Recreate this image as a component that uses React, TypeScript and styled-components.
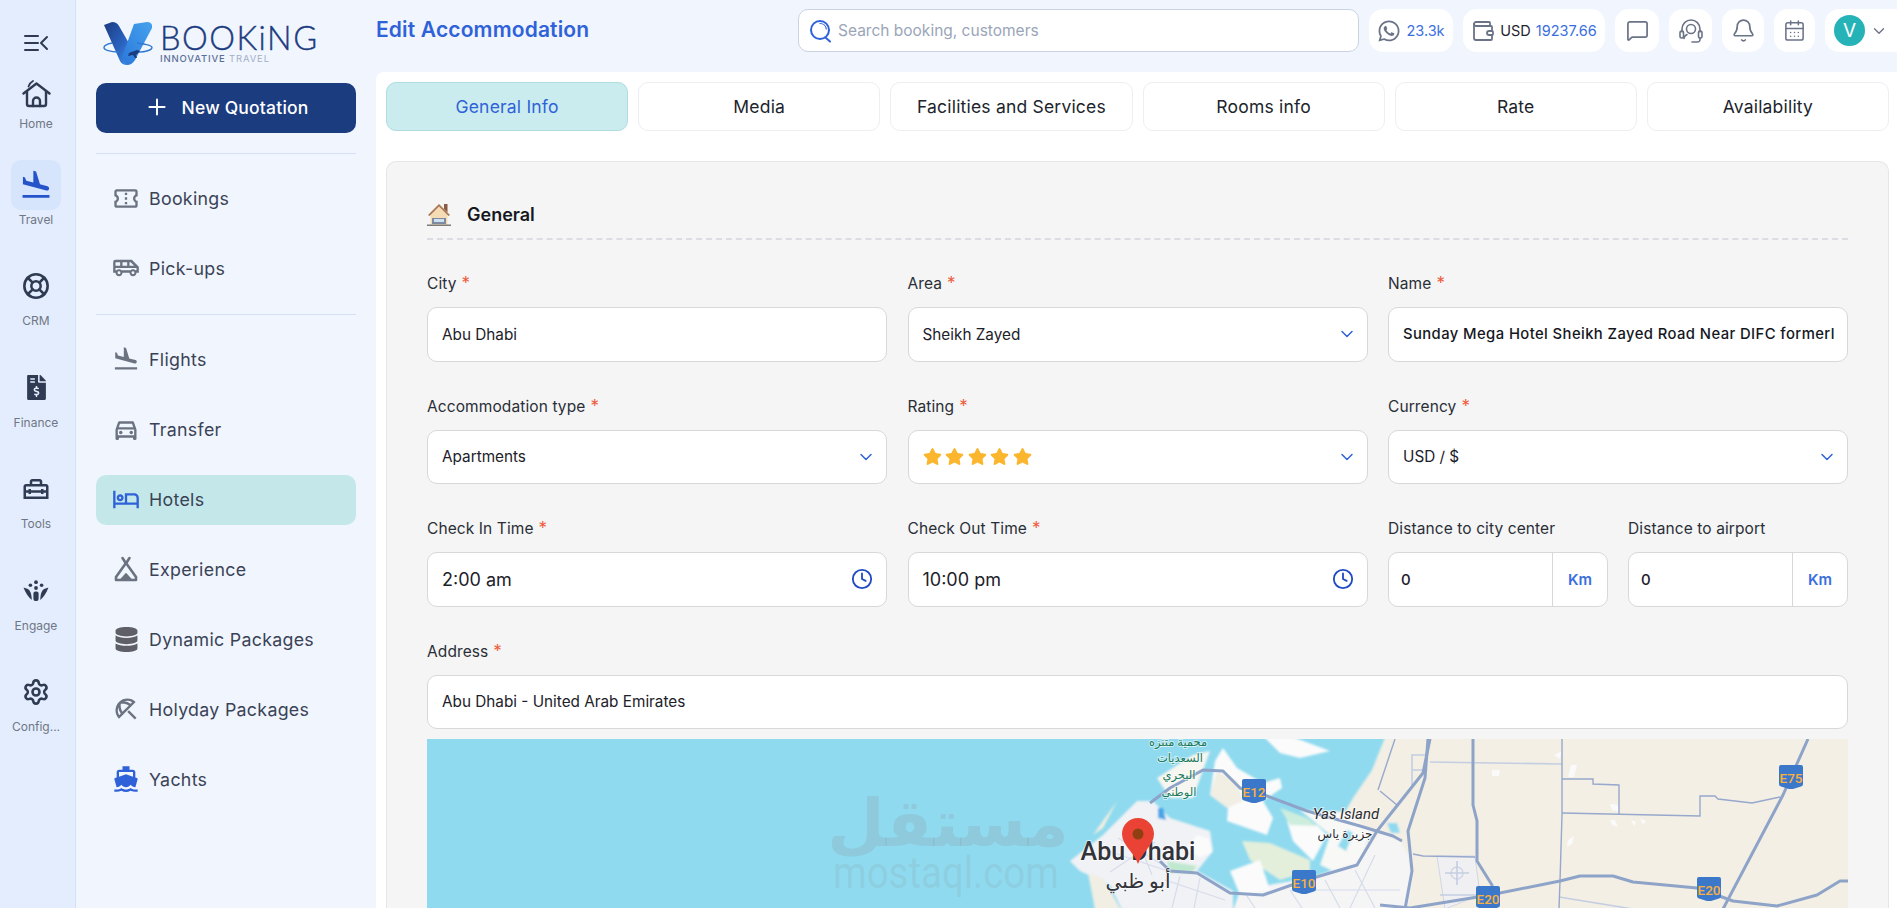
import type { ReactNode } from "react";
import styled, { createGlobalStyle } from "styled-components";
import {
  Bell,
  CalendarDays,
  ChevronDown,
  Clock,
  LifeBuoy,
  MessageSquare,
  Plus,
  Settings,
  Wallet,
} from "lucide-react";
import { FaDatabase, FaFileInvoiceDollar, FaStar, FaWhatsapp } from "react-icons/fa";
import {
  MdDirectionsBoat,
  MdFlightLand,
  MdOutlineAirportShuttle,
  MdOutlineBeachAccess,
  MdOutlineConfirmationNumber,
  MdOutlineDirectionsCar,
  MdOutlineHomeRepairService,
  MdOutlineHotel,
} from "react-icons/md";

const GlobalStyle = createGlobalStyle`
  html, body {
    margin: 0;
    height: 100%;
    overflow: hidden;
    background: #fff;
    font-family: Inter, "Noto Sans", sans-serif;
  }
  * { box-sizing: border-box; }
`;

const Page = styled.div`
  display: flex;
  height: 908px;
  width: 1897px;
  overflow: hidden;
`;

const Rail = styled.nav`
  width: 76px;
  flex: none;
  background: #e4edfd;
  border-right: 1px solid #d3e0f8;
  padding-right: 3px;
  display: flex;
  flex-direction: column;
  align-items: center;
`;

const RailToggle = styled.div`
  height: 74px;
  width: 100%;
  display: flex;
  justify-content: center;
  align-items: flex-start;
  padding-top: 33px;
`;

const RailList = styled.div`
  display: flex;
  flex-direction: column;
  gap: 33.5px;
  width: 100%;
`;

const RailItem = styled.div<{ $compact?: boolean }>`
  display: flex;
  flex-direction: column;
  align-items: center;
  height: ${(p) => (p.$compact ? "57px" : "68px")};
  margin-bottom: ${(p) => (p.$compact ? "-5px" : "0")};
`;

const RailIcon = styled.div<{ $active?: boolean; $compact?: boolean }>`
  width: 50px;
  height: ${(p) => (p.$compact ? "40px" : "50px")};
  flex: none;
  display: flex;
  align-items: center;
  justify-content: center;
  border-radius: 10px;
  color: ${(p) => (p.$active ? "#2553c9" : "#2f3b52")};
  background: ${(p) => (p.$active ? "#d6e4fc" : "transparent")};
`;

const RailLabel = styled.span`
  margin-top: 2px;
  font-size: 12px;
  line-height: 16px;
  color: #6f7785;
  white-space: nowrap;
`;

const Sidebar = styled.aside`
  width: 300px;
  flex: none;
  background: #f1f5fe;
  padding: 0 20px;
  display: flex;
  flex-direction: column;
`;

const LogoRow = styled.div`
  height: 83px;
  display: flex;
  align-items: flex-start;
  padding: 22px 0 0 7px;
  gap: 7px;
`;

const LogoText = styled.div`
  display: flex;
  flex-direction: column;
`;

const LogoWord = styled.span`
  font-family: Lato, sans-serif;
  font-weight: 300;
  font-size: 32.5px;
  line-height: 31px;
  letter-spacing: 1.5px;
  color: #1c3c80;
  -webkit-text-stroke: 0.4px #1c3c80;
`;

const LogoTag = styled.span`
  font-size: 9.5px;
  line-height: 11px;
  letter-spacing: 0.85px;
  font-weight: 500;
  color: #5a6f96;
  white-space: nowrap;

  em {
    font-style: normal;
    color: #a3afc6;
    font-weight: 400;
  }
`;

const NewButton = styled.div`
  height: 50px;
  flex: none;
  border-radius: 10px;
  background: #1c3c80;
  color: #fff;
  display: flex;
  align-items: center;
  justify-content: center;
  gap: 12px;
  padding-bottom: 2px;
  font-size: 17.5px;
  letter-spacing: 0.2px;
  font-weight: 500;
`;

const SideDivider = styled.div`
  height: 1px;
  flex: none;
  margin: 20px 0;
  background: #d5e0f8;
`;

const SideGroup = styled.div`
  display: flex;
  flex-direction: column;
  gap: 20px;
`;

const SideItem = styled.div<{ $active?: boolean }>`
  height: 50px;
  border-radius: 10px;
  display: flex;
  align-items: center;
  gap: 9px;
  padding: 0 0 2px 16px;
  font-size: 17.8px;
  letter-spacing: 0.3px;
  color: #3a4356;
  background: ${(p) => (p.$active ? "#c4e8e9" : "transparent")};
`;

const SideIcon = styled.span<{ $blue?: boolean }>`
  width: 28px;
  display: flex;
  justify-content: center;
  color: ${(p) => (p.$blue ? "#2f62d9" : "#6b7280")};
`;

const Main = styled.main`
  flex: 1;
  min-width: 0;
  background: #f1f5fe;
  display: flex;
  flex-direction: column;
`;

const Header = styled.header`
  height: 72px;
  flex: none;
  display: flex;
  align-items: flex-start;
  padding-top: 9px;
  gap: 10px;
`;

const Title = styled.h1`
  flex: 1;
  margin: 0;
  font-size: 21px;
  line-height: 42px;
  letter-spacing: 0.15px;
  font-weight: 600;
  color: #2f62d9;
`;

const Search = styled.div`
  width: 561px;
  height: 43px;
  flex: none;
  background: #fff;
  border: 1px solid #cbd3e3;
  border-radius: 10px;
  display: flex;
  align-items: center;
  gap: 6px;
  padding-left: 10px;
  font-size: 15.5px;
  color: #9aa5b8;
`;

const Chip = styled.div<{ $w: number; $clip?: boolean }>`
  width: ${(p) => p.$w}px;
  height: 43px;
  flex: none;
  background: #fff;
  border-radius: ${(p) => (p.$clip ? "14px 0 0 14px" : "14px")};
  display: flex;
  align-items: center;
  justify-content: center;
  gap: 5px;
  font-size: 14.5px;
  color: #6b7386;
`;

const Blue = styled.span`
  color: #3a6fe0;
`;

const Dark = styled.span`
  color: #1f2430;
`;

const Avatar = styled.span`
  width: 31px;
  height: 31px;
  border-radius: 50%;
  background: #26b3b8;
  color: #fff;
  font-size: 19px;
  display: flex;
  align-items: center;
  justify-content: center;
`;

const Content = styled.section`
  flex: 1;
  min-height: 0;
  background: #fff;
  border-radius: 8px 0 0 0;
  padding: 10px 8px 0 10px;
  display: flex;
  flex-direction: column;
  gap: 30px;
`;

const Tabs = styled.div`
  display: grid;
  grid-template-columns: repeat(6, 1fr);
  gap: 10px;
  flex: none;
`;

const Tab = styled.div<{ $active?: boolean }>`
  height: 49px;
  border-radius: 10px;
  border: 1px solid ${(p) => (p.$active ? "#aedcdf" : "#eceef2")};
  background: ${(p) => (p.$active ? "#cbecee" : "#fff")};
  color: ${(p) => (p.$active ? "#2f62d9" : "#20242c")};
  font-size: 17.5px;
  letter-spacing: 0.2px;
  display: flex;
  align-items: center;
  justify-content: center;
`;

const Panel = styled.div`
  flex: 1;
  min-height: 0;
  background: #f5f5f5;
  border: 1px solid #e6e6e6;
  border-bottom: none;
  border-radius: 10px 10px 0 0;
  padding: 41px 40px 0 40px;
  overflow: hidden;
`;

const PanelHead = styled.div`
  display: flex;
  align-items: center;
  gap: 16px;
  height: 22px;
  box-sizing: content-box;
  padding-bottom: 13px;
  border-bottom: 2px dashed #dcdde2;
  margin-bottom: 32px;
  font-size: 18px;
  font-weight: 600;
  color: #15181f;
`;

const FormGrid = styled.div`
  display: grid;
  grid-template-columns: repeat(3, 1fr);
  column-gap: 20.5px;
  row-gap: 33px;
`;

const Field = styled.div<{ $wide?: boolean }>`
  display: flex;
  flex-direction: column;
  gap: 11px;
  min-width: 0;
  grid-column: ${(p) => (p.$wide ? "1 / -1" : "auto")};
`;

const Label = styled.label`
  font-size: 15.5px;
  line-height: 24px;
  letter-spacing: 0.1px;
  color: #2a2e37;
  white-space: nowrap;
`;

const Req = styled.span`
  color: #ef5a3a;
  margin-left: 5px;
  font-size: 17px;
  line-height: 0;
`;

const Control = styled.div<{ $big?: boolean; $strong?: boolean }>`
  height: 54.5px;
  background: #fff;
  border: 1px solid #d8d8da;
  border-radius: 10px;
  padding: ${(p) => (p.$strong ? "0 0 0 14px" : "0 13px 0 14px")};
  display: flex;
  align-items: center;
  justify-content: space-between;
  font-size: ${(p) => (p.$big ? "18px" : "15.3px")};
  font-weight: ${(p) => (p.$strong ? 500 : 400)};
  letter-spacing: ${(p) => (p.$strong ? "0.42px" : "0")};
  overflow: hidden;
  white-space: nowrap;
  color: ${(p) => (p.$strong ? "#14171e" : "#1d2129")};
`;

const StrongText = styled.span`
  font-size: 14.8px;
`;

const ControlIcon = styled.span`
  color: #2f62d9;
  display: flex;
  flex: none;
`;

const ChevronIcon = styled(ControlIcon)`
  margin-right: -3px;
`;

const ClockIcon = styled(ControlIcon)`
  color: #1f4cc4;
`;

const Stars = styled.span`
  display: flex;
  gap: 3.5px;
  color: #fbb62e;
`;

const DistanceRow = styled.div`
  display: grid;
  grid-template-columns: 1fr 1fr;
  gap: 20px;
`;

const UnitControl = styled(Control)`
  padding: 0;
`;

const UnitValue = styled.span`
  flex: 1;
  padding-left: 12px;
  font-size: 15px;
  font-weight: 500;
`;

const Unit = styled.span`
  width: 55px;
  height: 100%;
  flex: none;
  border-left: 1px solid #d8d8da;
  display: flex;
  align-items: center;
  justify-content: center;
  font-size: 15px;
  font-weight: 600;
  color: #3a6fe0;
`;

const MapFrame = styled.div`
  margin-top: 10px;
  height: 170px;
  background: #8fdaef;
`;

const MapSvg = styled.svg`
  display: block;
  width: 100%;
  height: 100%;
`;

function ToggleIcon() {
  return (
    <svg width="26" height="20" viewBox="0 0 26 20" fill="none" stroke="#2f3b52" strokeWidth="2" strokeLinecap="round" strokeLinejoin="round">
      <path d="M2 3h13M2 10h13M2 17h13M24 4l-6 6 6 6" />
    </svg>
  );
}

function HomeIcon() {
  return (
    <svg width="29" height="28" viewBox="0 0 29 28" fill="none" stroke="#2f3b52" strokeWidth="2.4" strokeLinecap="round" strokeLinejoin="round">
      <path d="M1.500 13.500L14.500 3.500l13 10" />
      <path d="M5 11.500V24a2 2 0 0 0 2 2h15a2 2 0 0 0 2-2V11.500" />
      <path d="M11 26v-5a3.500 3.500 0 0 1 7 0v5" />
      <path d="M6.500 6.500Q8 2.500 11 1" strokeWidth="1.800" />
    </svg>
  );
}

function HeadsetIcon() {
  return (
    <svg width="24" height="26" viewBox="0 0 24 26" fill="none" stroke="currentColor" strokeWidth="1.600" strokeLinecap="round" strokeLinejoin="round">
      <path d="M3 14V11a9 9 0 0 1 18 0v3" />
      <circle cx="12" cy="11" r="4.500" />
      <path d="M8 16.500c-2 1-3 2.500-3 4" />
      <rect x="1" y="13" width="3.500" height="7" rx="1.500" />
      <rect x="19.500" y="13" width="3.500" height="7" rx="1.500" />
      <path d="M21 20v1.500a2.500 2.500 0 0 1-2.500 2.500H13" />
    </svg>
  );
}

function EngageIcon() {
  return (
    <svg width="26" height="22" viewBox="0 0 26 22" fill="#2f3b52">
      <circle cx="13" cy="2.2" r="1.9" />
      <circle cx="7.4" cy="5.2" r="1.8" />
      <circle cx="18.6" cy="5.2" r="1.8" />
      <circle cx="13" cy="8" r="1.9" />
      <path d="M0.5 7.5 L5 9 Q8.5 11 8.8 20 Q3.5 15.5 0.5 7.5Z" />
      <path d="M25.5 7.5 L21 9 Q17.5 11 17.2 20 Q22.5 15.5 25.5 7.5Z" />
      <rect x="10.4" y="11.5" width="5.2" height="9.5" rx="2" />
    </svg>
  );
}

function TentIcon() {
  return (
    <svg width="26" height="26" viewBox="0 0 26 26" fill="none" stroke="#6b7280" strokeWidth="2.6" strokeLinejoin="round" strokeLinecap="round">
      <path d="M9.500 2l3.500 5.500L16.500 2" />
      <path d="M13 7L3 21v3h20v-3Z" />
      <path d="M8.500 23.500l4.500-5 4.500 5Z" fill="#6b7280" />
    </svg>
  );
}

function SearchGlyph() {
  return (
    <svg width="23" height="24" viewBox="0 0 23 24" fill="none" stroke="#2f62d9" strokeWidth="2" strokeLinecap="round">
      <circle cx="11" cy="11" r="9" />
      <path d="M17 19l4 3.5" />
      <path d="M11 4.5c3.5 0 6 2.5 6.3 5.5" strokeWidth="1.2" />
    </svg>
  );
}

function HouseEmoji() {
  return (
    <svg width="24" height="23" viewBox="0 0 24 23">
      <rect x="17" y="1" width="3.5" height="8" fill="#8a5a44" />
      <path d="M12 1L1 12h2.500v10h17V12H23Z" fill="#f6dcb4" />
      <path d="M12 1L1 12l1.500 1L12 3.500 21.500 13l1.500-1Z" fill="#a8795a" />
      <rect x="5" y="15" width="14" height="6" fill="#7d8aa0" />
      <rect x="7" y="16" width="10" height="3" fill="#cfe0ee" />
      <rect x="0" y="21.500" width="24" height="1.500" fill="#7b7b7b" />
    </svg>
  );
}

function LogoMark() {
  return (
    <svg width="50" height="43" viewBox="0 0 50 43">
      <defs>
        <linearGradient id="logoA" x1="0" y1="0" x2="1" y2="1">
          <stop offset="0" stopColor="#1c3c80" />
          <stop offset="0.55" stopColor="#2a62c0" />
          <stop offset="1" stopColor="#3f9be8" />
        </linearGradient>
        <linearGradient id="logoB" x1="0" y1="1" x2="1" y2="0">
          <stop offset="0" stopColor="#2b78dc" />
          <stop offset="1" stopColor="#45a2ec" />
        </linearGradient>
      </defs>
      <path d="M1 3l8-3q5 0 7 4l15 26-7 13q-5 0-7-4Z" fill="url(#logoA)" />
      <path d="M31 2l13-2q4 0 5 3v3L32 38q-3 5-8 5l-5-8Z" fill="url(#logoB)" />
      <path d="M16 30c-9 0-15-2-15-4.500 0-2 3-3.500 8-4.500M34 21c8 1 15 2.500 15 4.500 0 3-9 5-22 5" fill="none" stroke="#2f7ad0" strokeWidth="1.400" />
      <path d="M26 31l8-3 3 1-4 4 1 3-2 0-2-3-5 1Z" fill="#1c3c80" />
    </svg>
  );
}

function Shield({ x, y, label }: { x: number; y: number; label: string }) {
  return (
    <g>
      <path
        d={`M${x - 12} ${y - 11}q0-2 2-2h20q2 0 2 2v17q0 2-2 2.500l-8 2.500h-4l-8-2.500q-2-.5-2-2.500Z`}
        fill="#3b78c9"
      />
      <text x={x} y={y + 5} textAnchor="middle" fontFamily="Roboto, sans-serif" fontWeight="500" fontSize="13.500" fill="#fbb03b">
        {label}
      </text>
    </g>
  );
}

function MapLabel({ x, y, size, fill, children, italic, weight }: { x: number; y: number; size: number; fill: string; children: ReactNode; italic?: boolean; weight?: number }) {
  return (
    <text
      x={x}
      y={y}
      textAnchor="middle"
      fontFamily="Roboto, 'DejaVu Sans', sans-serif"
      fontSize={size}
      fontStyle={italic ? "italic" : "normal"}
      fontWeight={weight ?? 400}
      fill={fill}
      stroke="#fff"
      strokeWidth="2"
      strokeOpacity="0.55"
      paintOrder="stroke"
    >
      {children}
    </text>
  );
}

function RoadMap() {
  const highway = { fill: "none", stroke: "#8ea3c8", strokeWidth: 3, strokeLinejoin: "round" as const };
  const minor = { fill: "none", stroke: "#97a8cc", strokeWidth: 1.4 };
  const faint = { fill: "none", stroke: "#c4cee2", strokeWidth: 1.6 };
  const street = { fill: "none", stroke: "#d6dcea", strokeWidth: 1.2 };
  return (
    <MapSvg viewBox="427 739 1421 170" preserveAspectRatio="none">
      <defs>
        <filter id="soft" x="-5%" y="-5%" width="110%" height="110%">
          <feGaussianBlur stdDeviation="0.9" />
        </filter>
      </defs>
      <rect x="427" y="739" width="1421" height="170" fill="#8fdaef" />
      <g filter="url(#soft)">
        <path d="M1388 730H1860V920H1340L1355 860 1372 836 1345 812 1353 798 1372 770Z" fill="#f3efe5" />
        <path d="M1300 810L1345 812 1372 832 1358 862 1335 872 1320 865 1330 835Z" fill="#f8f8f6" />
        <path d="M1338 846l9-16 6 3-7 18Z" fill="#8fdaef" />
        <path d="M1387 823h10l3 10h-9Z" fill="#8fdaef" />
        <path d="M1380 833L1400 841 1408 855 1412 881 1405 920H1230L1240 890 1310 878 1357 862Z" fill="#f5f5f6" />
        <path d="M1223 748L1237 768 1263 783 1280 778 1282 788 1263 801 1273 818 1267 835 1227 821 1228 808 1210 795 1215 761Z" fill="#fbfbfb" />
        <path d="M1217 771L1237 781 1243 801 1227 808 1210 795Z" fill="#f1eee4" />
        <path d="M1263 736H1290L1330 751 1300 758 1280 753Z" fill="#fbfbfb" />
        <path d="M1287 821L1317 825 1327 835 1313 861 1293 841Z" fill="#fbfbfb" />
        <path d="M1280 808L1307 818 1317 826 1290 825Z" fill="#cdeedd" />
        <path d="M1242 841L1270 843 1310 860 1310 871 1280 880 1250 860Z" fill="#e3efdb" />
        <path d="M1230 871L1260 860 1270 890 1240 895Z" fill="#fbfbfb" />
        <path d="M1070 861L1103 835 1137 801 1153 801 1170 818 1210 831 1213 851 1197 871 1233 891 1233 920H1127L1110 885 1080 871Z" fill="#f1f2f5" />
        <path d="M1088 873L1103 878 1127 920H1097Z" fill="#f1eee4" />
        <path d="M1157 778L1193 755 1210 751 1193 798 1170 798Z" fill="#f7f6f0" />
        <path d="M1167 861L1197 866 1192 873 1170 873Z" fill="#bfe8cf" />
        <path d="M1197 835l12 4 3 14-12 4-14-8Z" fill="#fbfbfb" />
        <path d="M1093 835L1117 801 1103 828Z" fill="#f4efe0" />
        <path d="M1158 808l5 0 3 12-8-2Z" fill="#4aa5e8" />
      </g>
      <path d="M1105 850l60 20M1118 838l50 30M1132 825l20 50M1110 872l45-30M1165 880l60 20M1180 876l-8 32M1200 878l-6 30M1245 893l10 15M1290 890l12 18M1325 880l15 28M1355 870l20 38M1375 855l-25 53M1310 890l90 0" {...street} />
      <path d="M1437 856H1475L1480 895 1445 909Z" fill="#f0f0f2" stroke="#cfd6e6" />
      <circle cx="1457" cy="873" r="6" fill="none" stroke="#cfd6e6" strokeWidth="1.500" />
      <path d="M1445 873h24M1457 861v24M1440 895h38" {...faint} />
      <path d="M1554 755l8-4-2 8ZM1571 765h6l-3 12h-6ZM1492 770h8l-1 6h-7ZM1610 804l8 1 2 7-8-2ZM1610 820h5l3 7-6-2ZM1568 840l6-4-2 8-5 3ZM1631 820l5 2-2 4ZM1640 818l6 3-3 4Z" fill="#fafafa" />
      <path d="M1430 762L1562 764" {...faint} />
      <path d="M1559 897L1633 909" {...faint} />
      <path d="M1425 755H1412v30M1412 770h15" {...faint} />
      <path d="M1380 791L1397 805M1395 739L1378 790" {...minor} />
      <path d="M1562 739V815L1560 881 1559 909" {...minor} />
      <path d="M1562 813L1700 816V796H1715L1718 799 1752 803 1780 797" {...minor} />
      <path d="M1562 779H1593V784L1619 785V815" {...minor} />
      <path d="M1413 854L1423 856 1475 857" {...minor} />
      <path d="M1150 803L1170 788 1203 770 1223 771 1240 788 1267 796 1307 811 1360 826 1393 836 1402 841" {...highway} />
      <path d="M1160 861L1170 871 1197 873 1230 893 1263 895 1303 881 1357 865 1377 831 1423 773 1430 739" {...highway} />
      <path d="M1428 739L1425 778 1408 831 1412 871 1405 909" {...highway} />
      <path d="M1473 739V805L1477 821V861L1492 885V893" {...highway} />
      <path d="M1380 905L1410 908 1490 895 1560 881 1580 876H1613L1633 882 1697 888 1733 901 1777 906 1817 895 1840 881H1848" {...highway} />
      <path d="M1808 739L1783 795 1723 909" {...highway} />
      <Shield x={1254} y={792} label="E12" />
      <Shield x={1304} y={883} label="E10" />
      <Shield x={1488} y={899} label="E20" />
      <Shield x={1709} y={890} label="E20" />
      <Shield x={1791} y={778} label="E75" />
      <MapLabel x={1178} y={746} size={11.500} fill="#1b7a5a">محمية متنزه</MapLabel>
      <MapLabel x={1180} y={762} size={11.500} fill="#1b7a5a">السعديات</MapLabel>
      <MapLabel x={1179} y={779} size={11.500} fill="#1b7a5a">البحري</MapLabel>
      <MapLabel x={1179} y={796} size={11.500} fill="#1b7a5a">الوطني</MapLabel>
      <MapLabel x={1346} y={819} size={15} fill="#2b2b30" italic>Yas Island</MapLabel>
      <MapLabel x={1345} y={838} size={12} fill="#2b2b30">جزيرة ياس</MapLabel>
      <MapLabel x={1138} y={860} size={25} fill="#33333a" weight={500}>Abu Dhabi</MapLabel>
      <MapLabel x={1138} y={888} size={20} fill="#33333a">أبو ظبي</MapLabel>
      <path d="M1138 818c-9 0-16 7-16 16 0 11 12 18 16 30 4-12 16-19 16-30 0-9-7-16-16-16Z" fill="#ea4335" />
      <circle cx="1138" cy="834" r="5.500" fill="#8f3f12" />
      <text x="948" y="846" textAnchor="middle" fontFamily="'DejaVu Sans', sans-serif" fontWeight="700" fontSize="66" fill="#8a9aa8" fillOpacity="0.26">مستقل</text>
      <text x="946" y="888" textAnchor="middle" fontFamily="Roboto, sans-serif" fontSize="44" textLength="226" lengthAdjust="spacingAndGlyphs" fill="#8a9aa8" fillOpacity="0.2">mostaql.com</text>
    </MapSvg>
  );
}

const railItems = [
  { label: "Travel", icon: <MdFlightLand size={34} />, active: true },
  { label: "CRM", icon: <LifeBuoy size={28} strokeWidth={2.200} /> },
  { label: "Finance", icon: <FaFileInvoiceDollar size={25} /> },
  { label: "Tools", icon: <MdOutlineHomeRepairService size={30} /> },
  { label: "Engage", icon: <EngageIcon /> },
  { label: "Config...", icon: <Settings size={28} strokeWidth={2.200} /> },
];

function NavRow({ icon, label, active, blue }: { icon: ReactNode; label: string; active?: boolean; blue?: boolean }) {
  return (
    <SideItem $active={active}>
      <SideIcon $blue={blue}>{icon}</SideIcon>
      {label}
    </SideItem>
  );
}

function Required() {
  return <Req>*</Req>;
}

function Chevron() {
  return (
    <ChevronIcon>
      <ChevronDown size={20} strokeWidth={1.800} />
    </ChevronIcon>
  );
}

export default function App() {
  return (
    <Page>
      <GlobalStyle />
      <Rail>
        <RailToggle>
          <ToggleIcon />
        </RailToggle>
        <RailList>
          <RailItem $compact>
            <RailIcon $compact>
              <HomeIcon />
            </RailIcon>
            <RailLabel>Home</RailLabel>
          </RailItem>
          {railItems.map((item) => (
            <RailItem key={item.label}>
              <RailIcon $active={item.active}>{item.icon}</RailIcon>
              <RailLabel>{item.label}</RailLabel>
            </RailItem>
          ))}
        </RailList>
      </Rail>

      <Sidebar>
        <LogoRow>
          <LogoMark />
          <LogoText>
            <LogoWord>BOOKiNG</LogoWord>
            <LogoTag>
              INNOVATIVE <em>TRAVEL</em>
            </LogoTag>
          </LogoText>
        </LogoRow>
        <NewButton>
          <Plus size={26} strokeWidth={1.800} />
          New Quotation
        </NewButton>
        <SideDivider />
        <SideGroup>
          <NavRow icon={<MdOutlineConfirmationNumber size={29} />} label="Bookings" />
          <NavRow icon={<MdOutlineAirportShuttle size={30} />} label="Pick-ups" />
        </SideGroup>
        <SideDivider />
        <SideGroup>
          <NavRow icon={<MdFlightLand size={30} />} label="Flights" />
          <NavRow icon={<MdOutlineDirectionsCar size={29} />} label="Transfer" />
          <NavRow icon={<MdOutlineHotel size={30} />} label="Hotels" active blue />
          <NavRow icon={<TentIcon />} label="Experience" />
          <NavRow icon={<FaDatabase size={25} color="#5f5f68" />} label="Dynamic Packages" />
          <NavRow icon={<MdOutlineBeachAccess size={28} />} label="Holyday Packages" />
          <NavRow icon={<MdDirectionsBoat size={30} />} label="Yachts" blue />
        </SideGroup>
      </Sidebar>

      <Main>
        <Header>
          <Title>Edit Accommodation</Title>
          <Search>
            <SearchGlyph />
            Search booking, customers
          </Search>
          <Chip $w={84}>
            <FaWhatsapp size={24} />
            <Blue>23.3k</Blue>
          </Chip>
          <Chip $w={142}>
            <Wallet size={24} strokeWidth={1.800} />
            <Dark>USD</Dark>
            <Blue>19237.66</Blue>
          </Chip>
          <Chip $w={44}>
            <MessageSquare size={23} strokeWidth={1.800} />
          </Chip>
          <Chip $w={43}>
            <HeadsetIcon />
          </Chip>
          <Chip $w={42}>
            <Bell size={25} strokeWidth={1.600} />
          </Chip>
          <Chip $w={41}>
            <CalendarDays size={23} strokeWidth={1.600} />
          </Chip>
          <Chip $w={72} $clip>
            <Avatar>V</Avatar>
            <ChevronDown size={18} strokeWidth={1.800} />
          </Chip>
        </Header>

        <Content>
          <Tabs>
            <Tab $active>General Info</Tab>
            <Tab>Media</Tab>
            <Tab>Facilities and Services</Tab>
            <Tab>Rooms info</Tab>
            <Tab>Rate</Tab>
            <Tab>Availability</Tab>
          </Tabs>
          <Panel>
            <PanelHead>
              <HouseEmoji />
              General
            </PanelHead>
            <FormGrid>
              <Field>
                <Label>City<Required /></Label>
                <Control>Abu Dhabi</Control>
              </Field>
              <Field>
                <Label>Area<Required /></Label>
                <Control>Sheikh Zayed<Chevron /></Control>
              </Field>
              <Field>
                <Label>Name<Required /></Label>
                <Control $strong>
                  <StrongText>Sunday Mega Hotel Sheikh Zayed Road Near DIFC formerl</StrongText>
                </Control>
              </Field>
              <Field>
                <Label>Accommodation type<Required /></Label>
                <Control>Apartments<Chevron /></Control>
              </Field>
              <Field>
                <Label>Rating<Required /></Label>
                <Control>
                  <Stars>
                    {[0, 1, 2, 3, 4].map((i) => (
                      <FaStar key={i} size={19} />
                    ))}
                  </Stars>
                  <Chevron />
                </Control>
              </Field>
              <Field>
                <Label>Currency<Required /></Label>
                <Control>USD / $<Chevron /></Control>
              </Field>
              <Field>
                <Label>Check In Time<Required /></Label>
                <Control $big>
                  2:00 am
                  <ClockIcon><Clock size={22} strokeWidth={2} /></ClockIcon>
                </Control>
              </Field>
              <Field>
                <Label>Check Out Time<Required /></Label>
                <Control $big>
                  10:00 pm
                  <ClockIcon><Clock size={22} strokeWidth={2} /></ClockIcon>
                </Control>
              </Field>
              <DistanceRow>
                <Field>
                  <Label>Distance to city center</Label>
                  <UnitControl>
                    <UnitValue>0</UnitValue>
                    <Unit>Km</Unit>
                  </UnitControl>
                </Field>
                <Field>
                  <Label>Distance to airport</Label>
                  <UnitControl>
                    <UnitValue>0</UnitValue>
                    <Unit>Km</Unit>
                  </UnitControl>
                </Field>
              </DistanceRow>
              <Field $wide>
                <Label>Address<Required /></Label>
                <Control>Abu Dhabi - United Arab Emirates</Control>
              </Field>
            </FormGrid>
            <MapFrame>
              <RoadMap />
            </MapFrame>
          </Panel>
        </Content>
      </Main>
    </Page>
  );
}
